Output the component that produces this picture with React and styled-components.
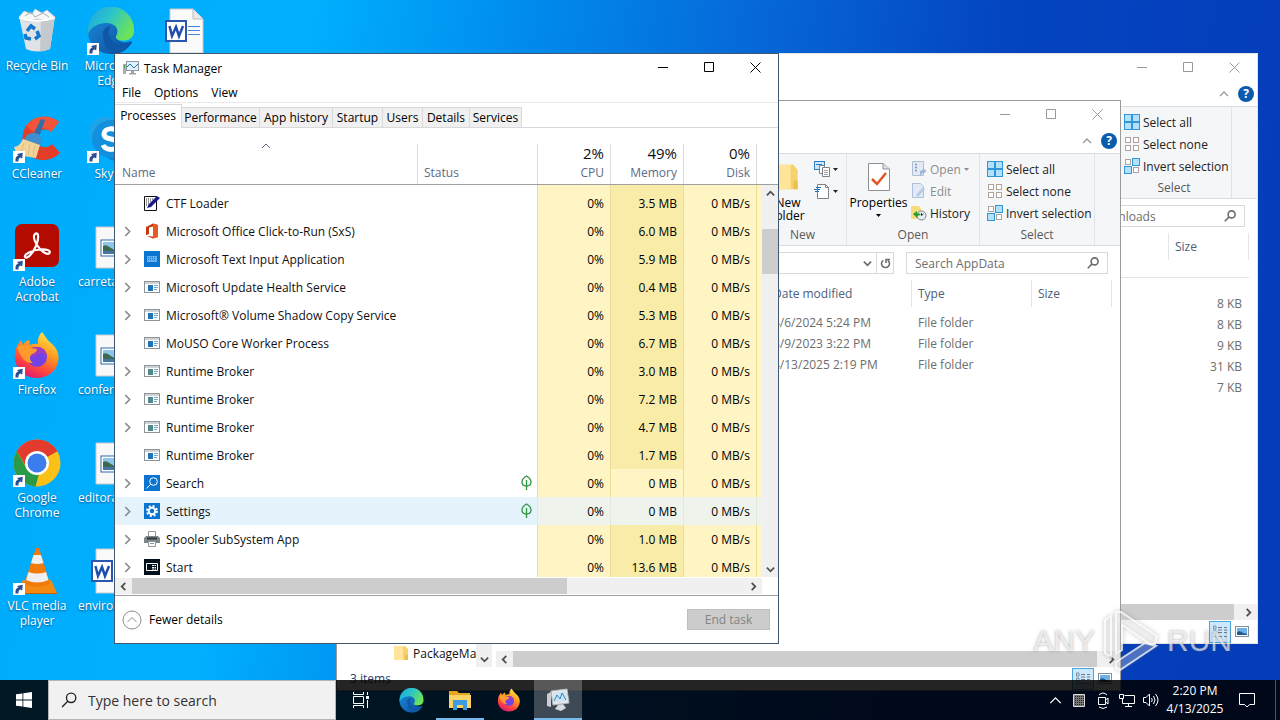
import React from "react";
import styled, { createGlobalStyle } from "styled-components";

const GlobalStyle = createGlobalStyle`
  * {
    box-sizing: border-box;
  }
  body {
    margin: 0;
    font-family: "Open Sans", "Noto Sans", sans-serif;
    font-size: 12px;
    color: #000;
  }
  button, input {
    font-family: inherit;
    font-size: inherit;
    color: inherit;
    border: none;
    background: none;
    padding: 0;
    margin: 0;
  }
  svg {
    display: block;
    flex-shrink: 0;
  }
`;

const Desktop = styled.main`
  position: relative;
  min-height: 100vh;
  overflow: hidden;
  background: linear-gradient(100deg, #00abfb 0%, #00b0ff 22%, #008fee 36%, #0668d8 54%, #0444c0 72%, #043bb8 100%);
`;

/* ---------- desktop shortcuts ---------- */

const Shortcuts = styled.div`
  display: grid;
  grid-template-columns: repeat(3, 74px);
  grid-auto-rows: 108px;
  padding-top: 7px;
`;

const Shortcut = styled.a`
  display: flex;
  flex-direction: column;
  align-items: center;
  color: #fff;
  text-decoration: none;
  text-align: center;
  text-shadow: 0 1px 2px rgba(0, 40, 90, 0.7);
  line-height: 15px;
`;

const ShortcutIcon = styled.span`
  position: relative;
  height: 48px;
  margin-bottom: 3px;
`;

const ArrowBadge = styled.span`
  position: absolute;
  left: 0;
  bottom: 0;
  background: #fff;
`;

const ShortcutName = styled.span`
  width: 100%;
  padding: 0 4px;
  text-align: ${(props) => (props.$start ? "left" : "center")};
`;

/* ---------- shared window parts ---------- */

const Window = styled.section`
  position: absolute;
  left: ${(props) => props.$left}px;
  top: ${(props) => props.$top}px;
  width: ${(props) => props.$width}px;
  height: 591px;
  display: flex;
  flex-direction: column;
  background: #fff;
  border: 1px solid ${(props) => props.$edge};
`;

const TitleBar = styled.header`
  display: flex;
  align-items: center;
  height: 28px;
  padding-left: 8px;
  gap: 5px;
`;

const WindowTitle = styled.h1`
  margin: 0;
  flex: 1;
  font-size: 12px;
  font-weight: 400;
`;

const CaptionButtons = styled.div`
  display: flex;
  align-self: flex-start;
  margin-left: auto;
`;

const CaptionButton = styled.button`
  display: flex;
  align-items: center;
  justify-content: center;
  width: 46px;
  height: 26px;
  color: ${(props) => (props.$dim ? "#999" : "#000")};
`;

const Scrollbar = styled.div`
  display: flex;
  flex-direction: ${(props) => (props.$vertical ? "column" : "row")};
  ${(props) => (props.$vertical ? "width: 16px;" : "height: 16px;")}
  flex-shrink: 0;
  background: #f0f0f0;
`;

const ScrollArrow = styled.button`
  display: flex;
  align-items: center;
  justify-content: center;
  width: ${(props) => (props.$wide ? 17 : 16)}px;
  height: 16px;
  flex-shrink: 0;
  color: #505050;
`;

const ScrollTrack = styled.div`
  flex: 1;
  display: flex;
  flex-direction: column;
`;

const ScrollThumb = styled.div`
  background: #cdcdcd;
  ${(props) => (props.$width ? `width: ${props.$width}; height: 100%;` : "")}
  ${(props) => (props.$height ? `height: ${props.$height}px; margin-top: ${props.$offset}px;` : "")}
`;

/* ---------- task manager ---------- */

const MenuBar = styled.nav`
  display: flex;
  gap: 13px;
  height: 21px;
  padding-left: 7px;
  border-bottom: 1px solid #ebebeb;
  line-height: 20px;
`;

const Tabs = styled.div`
  display: flex;
  align-items: flex-end;
  height: 25px;
  border-bottom: 1px solid #d9d9d9;
`;

const Tab = styled.button`
  width: ${(props) => props.$width}px;
  height: ${(props) => (props.$active ? 24 : 20)}px;
  padding-bottom: ${(props) => (props.$active ? 2 : 0)}px;
  margin-bottom: ${(props) => (props.$active ? -1 : 0)}px;
  background: ${(props) => (props.$active ? "#fff" : "#f0f0f0")};
  border-top: 1px solid #d9d9d9;
  border-right: 1px solid #d9d9d9;
  white-space: nowrap;
`;

const ProcessArea = styled.div`
  display: flex;
  flex: 1;
  min-height: 0;
`;

const TableClip = styled.div`
  flex: 1;
  min-width: 0;
  overflow: hidden;
`;

const ProcessTable = styled.table`
  width: 100%;
  table-layout: fixed;
  border-collapse: separate;
  border-spacing: 0;
`;

const HeadCell = styled.th`
  height: 57px;
  padding: 13px ${(props) => (props.$right ? 6 : 7)}px 3px;
  vertical-align: bottom;
  border-bottom: 1px solid #a0a0a0;
  background: ${(props) => (props.$first ? "none" : "linear-gradient(#dcdcdc, #dcdcdc) 0 16px / 1px 100% no-repeat")};
  font-weight: 400;
  text-align: ${(props) => (props.$right ? "right" : "left")};
  color: #5c6b87;
  line-height: 16px;
`;

const SortMark = styled.span`
  display: flex;
  justify-content: center;
  padding-bottom: 14px;
`;

const Usage = styled.strong`
  display: block;
  font-size: 15px;
  font-weight: 400;
  line-height: 24px;
  color: #111;
`;

const Row = styled.tr`
  height: 28px;
  background: ${(props) => (props.$hover ? "#e5f3fd" : "#fff")};
  &:first-child td {
    padding-top: 4px;
  }
`;

const NameCell = styled.td`
  padding: 0 7px;
`;

const NameLine = styled.div`
  display: grid;
  grid-template-columns: 16px 16px 1fr;
  gap: 6px;
  align-items: center;
  height: 28px;
  color: #111;
  white-space: nowrap;
`;

const RowChevron = styled.span`
  color: #8a8a8a;
`;

const StatusCell = styled.td`
  padding: 0 5px;
  & > svg {
    margin-left: auto;
  }
`;

const ValueCell = styled.td`
  padding: 0 6px;
  text-align: right;
  white-space: nowrap;
  border-left: 1px solid ${(props) => (props.$hover ? "#e3e9e0" : "#ebdc96")};
  background: ${(props) => (props.$hover ? "#eef3ec" : props.$warm ? "#f9eca8" : "#fff4c4")};
`;

const ScrollSide = styled.div`
  display: flex;
  flex-direction: column;
`;

const ScrollHead = styled.div`
  height: 57px;
  border-bottom: 1px solid #a0a0a0;
`;

const SideScroll = styled(Scrollbar)`
  flex: 1;
`;

const BottomScroll = styled.div`
  padding: 1px 16px 1px 0;
  border-bottom: 1px solid #a0a0a0;
`;

const Footer = styled.footer`
  display: flex;
  align-items: center;
  justify-content: space-between;
  height: 47px;
  padding: 0 8px 0 7px;
`;

const FewerDetails = styled.button`
  display: flex;
  align-items: center;
  gap: 7px;
`;

const EndTask = styled.button`
  width: 83px;
  height: 21px;
  background: #ccc;
  border: 1px solid #bfbfbf;
  color: #838383;
`;

/* ---------- file explorer ---------- */

const RibbonTabs = styled.div`
  display: flex;
  align-items: center;
  justify-content: flex-end;
  gap: 9px;
  height: 24px;
  padding-right: 3px;
  color: #999;
`;

const HelpButton = styled.button`
  width: 16px;
  height: 16px;
  border-radius: 8px;
  background: #0a5bad;
  color: #fff;
  font-weight: 700;
  line-height: 16px;
`;

const Ribbon = styled.div`
  display: flex;
  justify-content: flex-end;
  height: 93px;
  padding-right: 25px;
  background: #f5f6f7;
  border-top: 1px solid #dadbdc;
  border-bottom: 1px solid #dadbdc;
`;

const RibbonGroup = styled.fieldset`
  display: flex;
  flex-direction: column;
  width: ${(props) => props.$width}px;
  min-width: 0;
  margin: 0;
  padding: 4px 0 0;
  border: none;
  border-right: 1px solid #e2e3e4;
`;

const GroupBody = styled.div`
  display: flex;
  flex: 1;
  gap: ${(props) => props.$gap || 0}px;
  padding: 0 ${(props) => props.$pad}px;
`;

const GroupName = styled.span`
  height: 21px;
  line-height: 21px;
  text-align: center;
  color: #5a5a5a;
`;

const BigButton = styled.button`
  display: flex;
  flex-direction: column;
  align-items: center;
  width: ${(props) => props.$width}px;
  padding-top: 5px;
  line-height: 13px;
  gap: 5px;
`;

const SmallButtons = styled.div`
  display: flex;
  flex-direction: column;
`;

const SmallButton = styled.button`
  display: flex;
  align-items: center;
  gap: 3px;
  height: 22px;
  white-space: nowrap;
  color: ${(props) => (props.$off ? "#8d8d8d" : "#222")};
`;

const AddressRow = styled.div`
  display: flex;
  justify-content: flex-end;
  gap: 12px;
  padding: 6px 12px 6px 80px;
`;

const AddressBox = styled.div`
  flex: 1;
  display: flex;
  justify-content: flex-end;
  height: 22px;
  border: 1px solid #d9d9d9;
  color: #6d6d6d;
`;

const AddressButton = styled.button`
  display: flex;
  align-items: center;
  justify-content: center;
  width: 17px;
  border-left: ${(props) => (props.$split ? "1px solid #d9d9d9" : "none")};
`;

const SearchBox = styled.label`
  display: flex;
  align-items: center;
  justify-content: space-between;
  width: 202px;
  height: 22px;
  padding: 0 8px;
  border: 1px solid #d9d9d9;
  color: #6d6d6d;
`;

const SearchInput = styled.input`
  width: 150px;
  outline: none;
  &::placeholder {
    color: #6d6d6d;
    opacity: 1;
  }
`;

const ExplorerBody = styled.div`
  display: flex;
  flex: 1;
  min-height: 0;
`;

const NavPane = styled.nav`
  display: flex;
  width: 155px;
`;

const NavList = styled.div`
  flex: 1;
  display: flex;
  align-items: flex-end;
  padding: 0 0 3px 56px;
`;

const NavItem = styled.a`
  display: flex;
  align-items: center;
  gap: 4px;
  height: 22px;
  color: #111;
  text-decoration: none;
`;

const NavScroll = styled(Scrollbar)`
  justify-content: flex-end;
`;

const FilePane = styled.div`
  flex: 1;
  display: flex;
  flex-direction: column;
  min-width: 0;
  padding-left: 4px;
`;

const FileTable = styled.table`
  flex-shrink: 0;
  width: calc(100% - 8px);
  table-layout: fixed;
  border-collapse: separate;
  border-spacing: 0;
  color: #6d6d6d;
`;

const FileHead = styled.th`
  height: 27px;
  padding: 0 6px;
  font-weight: 400;
  text-align: left;
  color: #4c607a;
  border-right: 1px solid #e5e5e5;
`;

const GroupRule = styled.td`
  height: ${(props) => props.$height}px;
  padding: 0;
  vertical-align: top;
`;

const Rule = styled.hr`
  margin: 17px 0 0;
  border: none;
  border-top: 1px solid #e2e2e2;
`;

const FileCell = styled.td`
  height: 21px;
  padding: 0 7px 0 6px;
  white-space: nowrap;
  text-align: ${(props) => (props.$right ? "right" : "left")};
`;

const Spacer = styled.div`
  flex: 1;
`;

const StatusBar = styled.footer`
  display: flex;
  justify-content: space-between;
  align-items: center;
  height: 23px;
  padding: 0 4px 0 13px;
  color: #1e3c6e;
`;

const ViewButtons = styled.div`
  display: flex;
  align-items: center;
`;

const ViewButton = styled.button`
  display: flex;
  align-items: center;
  justify-content: center;
  width: 22px;
  height: 22px;
  background: ${(props) => (props.$on ? "#cce8ff" : "none")};
  border: 1px solid ${(props) => (props.$on ? "#4aa5dc" : "transparent")};
`;

/* ---------- taskbar ---------- */

const Taskbar = styled.nav`
  position: absolute;
  left: 0;
  right: 0;
  bottom: 0;
  display: flex;
  height: 40px;
  background: rgba(0, 0, 0, 0.86);
  color: #fff;
`;

const TaskButton = styled.button`
  display: flex;
  align-items: center;
  justify-content: center;
  width: 48px;
  margin-right: ${(props) => props.$gap || 0}px;
  background: ${(props) => (props.$active ? "rgba(255, 255, 255, 0.24)" : "none")};
  border-top: 2px solid transparent;
  border-bottom: 2px solid ${(props) => (props.$open ? "#76b9ed" : "transparent")};
`;

const TaskSearch = styled.label`
  display: flex;
  align-items: center;
  gap: 11px;
  width: 288px;
  padding-left: 12px;
  background: #f1f1f1;
  border: 1px solid #b5b5b5;
  color: #222;
`;

const TaskSearchInput = styled.input`
  flex: 1;
  font-size: 14px;
  outline: none;
  &::placeholder {
    color: #333;
    opacity: 1;
  }
`;

const Tray = styled.div`
  display: flex;
  align-items: center;
  margin-left: auto;
`;

const TrayButton = styled.button`
  display: flex;
  align-items: center;
  justify-content: center;
  width: ${(props) => props.$width || 24}px;
  height: 40px;
`;

const Clock = styled.time`
  width: 64px;
  text-align: center;
  line-height: 18px;
`;

const ShowDesktop = styled.button`
  width: 5px;
  height: 40px;
  margin-left: 8px;
  border-left: 1px solid #4a5568;
`;

const Watermark = styled.div`
  position: absolute;
  right: 48px;
  bottom: 46px;
  display: flex;
  align-items: center;
  gap: 8px;
  height: 66px;
  font-family: "Liberation Sans", sans-serif;
  font-size: 30px;
  color: rgba(255, 255, 255, 0.65);
  text-shadow: 0 0 3px rgba(90, 90, 90, 0.5);
  pointer-events: none;
  & > svg {
    filter: drop-shadow(0 0 2px rgba(90, 90, 90, 0.5));
  }
`;

/* ---------- drawings ---------- */

const Chevron = ({ dir = "down", size = 9, stroke = 2 }) => {
  const paths = {
    down: "M1 3 L5 7 L9 3",
    up: "M1 7 L5 3 L9 7",
    left: "M7 1 L3 5 L7 9",
    right: "M3 1 L7 5 L3 9",
  };
  return (
    <svg width={size} height={size} viewBox="0 0 10 10" fill="none" stroke="currentColor" strokeWidth={stroke}>
      <path d={paths[dir]} />
    </svg>
  );
};

const Caret = () => (
  <svg width="5" height="3" viewBox="0 0 5 3" fill="currentColor">
    <path d="M0 0H5L2.5 3Z" />
  </svg>
);

const Minimize = () => (
  <svg width="10" height="10" viewBox="0 0 10 10" stroke="currentColor">
    <path d="M0 5.5H10" />
  </svg>
);

const Maximize = () => (
  <svg width="10" height="10" viewBox="0 0 10 10" stroke="currentColor" fill="none">
    <path d="M.5 .5H9.5V9.5H.5Z" />
  </svg>
);

const Close = () => (
  <svg width="11" height="11" viewBox="0 0 11 11" stroke="currentColor" fill="none">
    <path d="M.5 .5L10.5 10.5M10.5 .5L.5 10.5" />
  </svg>
);

const Magnifier = ({ size = 12, stroke = 1.6 }) => (
  <svg width={size} height={size} viewBox="0 0 12 12" stroke="currentColor" fill="none" strokeWidth={stroke}>
    <circle cx="7.6" cy="4.4" r="3.5" />
    <path d="M5.1 6.9L.8 11.2" />
  </svg>
);

const ArrowGlyph = () => (
  <svg width="12" height="12" viewBox="0 0 12 12">
    <path d="M2.500 10.500C2 7 3.500 5 5.500 4.600L4 3L9.800 1.800L9.200 7.600L7.500 6.400C5.800 7 5.200 8.300 5.500 10.500Z" fill="#2b4f93" />
  </svg>
);

const RecycleBin = () => (
  <svg width="48" height="48" viewBox="0 0 48 48">
    <path d="M6 9L42 9L37 42Q24 47 13 42Z" fill="#dfe3e6" />
    <path d="M28 10L42 9L37 42Q32 44 27 44.500Z" fill="#c4c9ce" />
    <path d="M6 10L11 4L19 7L22 2L29 6L34 3L42 10L34 14L24 12L14 15Z" fill="#f4f6f7" stroke="#b9c0c5" strokeWidth=".7" />
    <path d="M12 9L18 5L22 10L30 6L36 10" fill="none" stroke="#a9b1b7" />
    <path d="M6 11Q24 17 42 11" fill="none" stroke="#fff" strokeWidth="1.500" />
    <g fill="none" stroke="#1678cc" strokeWidth="3.500">
      <path d="M14 24L18 19L22 22" />
      <path d="M24 24L26 29L22 32" />
      <path d="M18 32L13 31L12 27" />
    </g>
  </svg>
);

const EdgeLogo = ({ size = 48 }) => (
  <svg width={size} height={size} viewBox="0 0 48 48">
    <defs>
      <linearGradient id="edgeTop" x1="0" y1="0" x2="1" y2=".5">
        <stop offset="0" stopColor="#1aa4e4" />
        <stop offset=".5" stopColor="#2cc4c8" />
        <stop offset="1" stopColor="#6be35a" />
      </linearGradient>
      <linearGradient id="edgeLow" x1="0" y1="0" x2="1" y2="1">
        <stop offset="0" stopColor="#1b8fdc" />
        <stop offset="1" stopColor="#0c4a9c" />
      </linearGradient>
    </defs>
    <path d="M1 24C2 10 12 2 24 2L34 24L30 30C31 35 38 37 44 34Q46 35 44 37C39 44 32 47 24 47C10 47 1 36 1 24Z" fill="url(#edgeLow)" />
    <path d="M1 23A23 23 0 0 1 47 22C48 31 41 34 35 33.500C29 33 27.500 31 30 27C32 21 27 16 20 16C9 16 2 22 1 28Z" fill="url(#edgeTop)" />
    <path d="M16 27C16 21 20 19 24 19C18 27 25 38 36 38C40 38 42 37 44 36C40 43 34 47 26 47C20 43 16 36 16 27Z" fill="#0f58a8" />
  </svg>
);

const WordDoc = () => (
  <svg width="48" height="48" viewBox="0 0 48 48">
    <path d="M9 2H32L42 12V46H9Z" fill="#fafafa" stroke="#c8c8c8" />
    <path d="M32 2V12H42" fill="#e9e9e9" stroke="#bdbdbd" />
    <path d="M27 19.500H39M27 23.500H39M27 27.500H39" stroke="#4a84d4" />
    <rect x="5" y="14" width="20" height="20" fill="#fff" stroke="#2a56b0" strokeWidth="2" />
    <path d="M8.500 19L11 29L15 20L18 29L22 19" fill="none" stroke="#1f4fae" strokeWidth="2.500" />
  </svg>
);

const CCleanerLogo = () => (
  <svg width="48" height="48" viewBox="0 0 48 48">
    <path d="M46 7C37-1 20 0 13 11C6 23 10 38 21 43C30 47 40 45 47 38L39 29C33 35 24 32 23 24C23 15 32 12 38 17Z" fill="#e23d28" />
    <path d="M46 7C37-1 20 0 13 11L22 18C26 12 33 12 38 17Z" fill="#f0553c" />
    <path d="M28 4L32 5L26 22L20 20Z" fill="#2e6fa8" />
    <path d="M14 20Q20 16 27 20L29 29L10 27Z" fill="#3f8fcf" />
    <path d="M10 24L27 30L23 43L4 40Q2 35 1 32Q7 31 10 24Z" fill="#f2d49b" />
    <path d="M11 28L8 38M17 29L15 40M22 31L20 41" stroke="#dfbd80" />
  </svg>
);

const SkypeLogo = () => (
  <svg width="48" height="48" viewBox="0 0 48 48">
    <circle cx="18" cy="18" r="16" fill="#1fa4e8" />
    <circle cx="30" cy="30" r="16" fill="#0f7fd4" />
    <circle cx="24" cy="24" r="19" fill="#128fdd" />
    <path d="M31 17C28 12 17 13 17 19C17 26 31 22 31 29C31 36 19 36 16 30" fill="none" stroke="#fff" strokeWidth="5" />
  </svg>
);

const AcrobatLogo = () => (
  <svg width="48" height="48" viewBox="0 0 48 48">
    <rect x="2" y="1" width="44" height="43" rx="7" fill="#b30b00" />
    <path d="M22 11C26 8 26 16 23 23C20 30 14 37 12 34C11 31 20 27 27 26.500C33 26 38 27 36.500 30C34 33 27 27 24 22C21 17 20 13 22 11Z" fill="none" stroke="#fff" strokeWidth="2.200" />
  </svg>
);

const FirefoxLogo = ({ size = 48 }) => (
  <svg width={size} height={size} viewBox="0 0 48 48">
    <defs>
      <linearGradient id="foxFire" x1=".8" y1="0" x2=".3" y2="1">
        <stop offset="0" stopColor="#fff14f" />
        <stop offset=".4" stopColor="#ff9a1f" />
        <stop offset=".75" stopColor="#ff4240" />
        <stop offset="1" stopColor="#d81a74" />
      </linearGradient>
    </defs>
    <path d="M29 1C33 6 34 9 38 12C44 17 47 24 45 31C43 41 34 47 24 47C12 47 3 39 2 28C1 20 4 14 8 9L10 14Q12 10 16 9L17 14Q21 12 25 13Q24 6 29 1Z" fill="url(#foxFire)" />
    <circle cx="24" cy="26" r="10" fill="#7542e5" />
    <path d="M15 22C15 17 19 16 24 16C30 16 34 20 34 26C31 21 27 21 24 24C21 26 16 27 15 22Z" fill="#a03cc4" />
    <path d="M4 16C8 13 14 14 18 17L24 18C24 22 20 22 18 24C16 27 17 30 20 32C13 33 8 27 4 16Z" fill="#ff9a2b" />
  </svg>
);

const ChromeLogo = () => (
  <svg width="48" height="48" viewBox="0 0 48 48">
    <circle cx="24" cy="24" r="23.500" fill="#fbc116" />
    <path d="M24 24L3.600 12.300A23.500 23.500 0 0 1 44.400 12.300Z" fill="#e33b2e" />
    <path d="M24 12H44.300Q34 -3 14 3L3.700 12.200L14 29Z" fill="#e33b2e" />
    <path d="M3.700 12.200L14 30Q19 36 26 35L22.500 47.400A23.500 23.500 0 0 1 3.700 12.200Z" fill="#2a9a48" />
    <circle cx="24" cy="24" r="12" fill="#fff" />
    <circle cx="24" cy="24" r="9.500" fill="#3b7ded" />
  </svg>
);

const VlcLogo = () => (
  <svg width="48" height="48" viewBox="0 0 48 48">
    <path d="M10 33H38L44 46H4Z" fill="#f58a12" />
    <path d="M4 46H44V47H4Z" fill="#c75f00" />
    <path d="M23 1H26L37 37Q24 43 11 37Z" fill="#f27a0a" />
    <path d="M20.500 8H28L30.500 16Q24 18 18 16Z" fill="#efefef" />
    <path d="M15.500 25Q24 28 33 25L35.500 33Q24 38 13 33Z" fill="#efefef" />
  </svg>
);

const ImageDoc = () => (
  <svg width="48" height="48" viewBox="0 0 48 48">
    <path d="M9 4H40V45H9Z" fill="#f8f8f8" stroke="#c9c9c9" />
    <rect x="14" y="17" width="22" height="16" fill="#fff" stroke="#2f6da8" />
    <rect x="16" y="19" width="18" height="12" fill="#8cc4ea" />
    <path d="M16 23Q19 21 24 25T34 28V31H16Z" fill="#3b6b4c" />
    <path d="M16 28H34V31H16Z" fill="#4477a8" />
  </svg>
);

const TaskManagerIcon = () => (
  <svg width="16" height="16" viewBox="0 0 16 16">
    <rect x="0" y="4" width="3" height="10" fill="#a9b0b3" />
    <rect x="1" y="5" width="1" height="3" fill="#3ca94a" />
    <rect x="3.500" y="1.500" width="12" height="9" fill="#dff1fb" stroke="#8e9aa3" />
    <path d="M4 7L7 4L11 8L15 4" fill="none" stroke="#2678b8" />
    <path d="M8 11H11V13H13V14.500H6V13H8Z" fill="#9ba4aa" />
  </svg>
);

const TaskManagerLogo = () => (
  <svg width="24" height="24" viewBox="0 0 24 24">
    <path d="M1 6L5 4V19L1 18Z" fill="#c9cdd0" />
    <path d="M5 3L21 1L23 15L7 17Z" fill="#e4e9ec" stroke="#b4babe" />
    <path d="M7 5L20 3L21 13L8 15Z" fill="#cfe4f1" />
    <path d="M8 13L11 7L14 11L16 5L20 12" fill="none" stroke="#3386c0" />
    <path d="M12 17L17 16L20 20L15 23L9 21Z" fill="#d5dadd" />
  </svg>
);

const CtfIcon = () => (
  <svg width="16" height="16" viewBox="0 0 16 16">
    <path d="M.5 1.500H12.500V15.500H.5Z" fill="#fff" stroke="#111" />
    <path d="M2 4H9M2 6H8M2 8H6M2 10H5" stroke="#333" strokeDasharray="1 1" />
    <path d="M3 13L5 9L13 1L16 3L7 12Z" fill="#161a8c" />
  </svg>
);

const OfficeIcon = () => (
  <svg width="16" height="16" viewBox="0 0 16 16">
    <path d="M2 4L9 .5L14 2V14L9 15.500L3 13L9 13.500V3.500L5 4.500V11L2 12.200Z" fill="#c8360a" />
    <path d="M9 .5L14 2V14L9 15.500Z" fill="#ea5a1f" />
  </svg>
);

const KeyboardIcon = () => (
  <svg width="16" height="16" viewBox="0 0 16 16">
    <rect width="16" height="16" fill="#0a74d1" />
    <rect x="3" y="5" width="10" height="6" fill="#69b1ee" />
    <path d="M4 6.500H12M4 8.500H12" stroke="#0a74d1" strokeDasharray="1 1" />
  </svg>
);

const AppIcon = ({ tint = "#1f74b8" }) => (
  <svg width="16" height="16" viewBox="0 0 16 16">
    <rect x=".5" y="2.500" width="15" height="11" fill="#fdfdfd" stroke="#8d959b" />
    <path d="M1 4H15" stroke="#c0c5c9" strokeWidth="1.500" />
    <rect x="4" y="6" width="5" height="6" fill={tint} />
    <path d="M10 6.500H14M10 8.500H14M10 10.500H13" stroke="#78a8c8" />
  </svg>
);

const SearchAppIcon = () => (
  <svg width="16" height="16" viewBox="0 0 16 16">
    <rect width="16" height="16" fill="#0a74d1" />
    <circle cx="9.500" cy="6.500" r="3.800" fill="none" stroke="#fff" />
    <path d="M6.700 9.300L2.500 13.500" stroke="#fff" />
  </svg>
);

const SettingsIcon = () => (
  <svg width="16" height="16" viewBox="0 0 16 16">
    <rect width="16" height="16" fill="#0a74d1" />
    <circle cx="8" cy="8" r="5" fill="none" stroke="#fff" strokeWidth="2" strokeDasharray="2 1.930" />
    <circle cx="8" cy="8" r="3.300" fill="none" stroke="#fff" strokeWidth="2" />
  </svg>
);

const PrinterIcon = () => (
  <svg width="16" height="16" viewBox="0 0 16 16">
    <path d="M4.500 .5H11.500V6H4.500Z" fill="#fff" stroke="#8c9499" />
    <path d="M0 7L2 5H14L16 7V12H0Z" fill="#7d868b" />
    <path d="M3 7.500H13" stroke="#30373b" strokeWidth="2" />
    <path d="M4.500 10.500H11.500V15.500H4.500Z" fill="#fff" stroke="#8c9499" />
    <path d="M6 12.500H10" stroke="#8c9499" />
  </svg>
);

const StartAppIcon = () => (
  <svg width="16" height="16" viewBox="0 0 16 16">
    <rect width="16" height="16" fill="#02101c" />
    <path d="M2.500 4.500H13.500V11.500H2.500Z" fill="none" stroke="#fff" />
    <path d="M8 6.500H12M8 8.500H12M8 10H12" stroke="#fff" strokeDasharray="2 .500" />
  </svg>
);

const Leaf = () => (
  <svg width="11" height="16" viewBox="0 0 11 16" fill="none" stroke="#2d9440">
    <path d="M5.500 1C2 3 1 5 1 7C1 9.500 3 11 5.500 11C8 11 10 9.500 10 7C10 5 9 3 5.500 1Z" strokeWidth="1.300" />
    <path d="M5.500 5V15" strokeWidth="1.300" />
  </svg>
);

const FolderIcon = ({ width = 16, height = 16 }) => (
  <svg width={width} height={height} viewBox="0 0 16 16" preserveAspectRatio="none">
    <path d="M1 1H12L15 4V15H1Z" fill="#f7d16b" />
    <path d="M1 1H10V15H1Z" fill="#ffe49a" />
    <path d="M12 10H15V15H12Z" fill="#eebf4b" />
  </svg>
);

const CopyIcon = () => (
  <svg width="16" height="16" viewBox="0 0 16 16" fill="#fff">
    <rect x=".5" y=".5" width="10" height="8" fill="#cfe6f8" stroke="#2f7fc0" />
    <path d="M2 3.500H8" stroke="#2f7fc0" />
    <path d="M5.500 4.500H10.500V12.500H5.500Z" stroke="#7c8288" />
    <path d="M8.500 6.500H15.500V15.500H8.500Z" stroke="#7c8288" />
    <path d="M10 9.500H14M10 11.500H14M10 13.500H14" stroke="#9aa1a7" />
  </svg>
);

const EasyAccessIcon = () => (
  <svg width="16" height="16" viewBox="0 0 16 16" fill="none">
    <path d="M3.500 1.500H11.500L14.500 4.500V15.500H3.500Z" fill="#fff" stroke="#7c8288" />
    <path d="M11.500 1.500V4.500H14.500" stroke="#7c8288" />
    <path d="M2 4.500H7M0 6.500H6M1 8.500H5" stroke="#1f6fb5" />
  </svg>
);

const PropertiesIcon = () => (
  <svg width="22" height="28" viewBox="0 0 22 28">
    <path d="M.5 .5H15L21.500 6V27.500H.5Z" fill="#fff" stroke="#8d9196" />
    <path d="M15 .5V6H21.500" fill="#d6e4f0" stroke="#8d9196" />
    <path d="M4 16L9 21L18 10" fill="none" stroke="#e2541f" strokeWidth="2.500" />
  </svg>
);

const OpenIcon = () => (
  <svg width="16" height="16" viewBox="0 0 16 16" opacity=".8">
    <path d="M1.500 .5H12.500V14.500H1.500Z" fill="#dfe8f4" stroke="#9db2cd" />
    <path d="M4 3.500H6M4 6.500H6M4 9.500H6" stroke="#5d7fb5" strokeWidth="1.500" />
    <path d="M9 15V11Q9 9 12 9V7L15.500 10L12 13V11.500Z" fill="#88a5d0" />
  </svg>
);

const EditIcon = () => (
  <svg width="16" height="16" viewBox="0 0 16 16" opacity=".8">
    <path d="M1.500 .5H9.500L12.500 3.500V14.500H1.500Z" fill="#dde8f5" stroke="#9db2cd" />
    <path d="M5 12L12 4L14 6L7 14Z" fill="#a9c0e0" />
  </svg>
);

const HistoryIcon = () => (
  <svg width="16" height="16" viewBox="0 0 16 16">
    <path d="M0 1H8L10 4V14H0Z" fill="#fbdc7c" />
    <circle cx="10.500" cy="10.500" r="4.500" fill="#e8eef2" stroke="#7a848c" />
    <path d="M10.500 8V10.500L12.500 9" stroke="#333" fill="none" />
    <path d="M2 9L6 6V8Q9 8 10 10Q7 10 6 11.500V13Z" fill="#25a13a" />
  </svg>
);

const Squares = ({ on }) => (
  <svg width="16" height="16" viewBox="0 0 16 16">
    {[[0, 0], [8, 0], [0, 8], [8, 8]].map(([x, y], i) => (
      <rect
        key={i}
        x={x + (on[i] ? 0.5 : 1.5)}
        y={y + (on[i] ? 0.5 : 1.5)}
        width={on[i] ? 7 : 5}
        height={on[i] ? 7 : 5}
        fill={on[i] ? "#b3e0fb" : "#fff"}
        stroke={on[i] ? "#2f96d8" : "#b0a29c"}
      />
    ))}
  </svg>
);

const Refresh = () => (
  <svg width="11" height="11" viewBox="0 0 11 11" fill="none" stroke="currentColor" strokeWidth="1.600">
    <path d="M3.200 2.300A4 4 0 1 0 7.800 2.300" />
    <path d="M6 5V1.500H10" />
  </svg>
);

const DetailsView = () => (
  <svg width="16" height="14" viewBox="0 0 16 14" fill="none">
    <path d="M1.500 1V4H4V1ZM1.500 6V9H4V6Z" stroke="#7d8ea0" />
    <path d="M6 2.500H10M12 2.500H15M6 5H10M12 5H15M6 7.500H10M12 7.500H15M1 11.500H4M6 11.500H10M12 11.500H15" stroke="#6c7986" />
  </svg>
);

const ThumbsView = () => (
  <svg width="14" height="12" viewBox="0 0 14 12">
    <rect x=".5" y=".5" width="13" height="10" fill="#fff" stroke="#7f8fa0" />
    <rect x="2" y="2" width="10" height="7" fill="#6db1e6" />
    <path d="M2 9V6Q5 4 8 7L12 8V9Z" fill="#275a8c" />
  </svg>
);

const WindowsLogo = () => (
  <svg width="16" height="16" viewBox="0 0 16 16" fill="#fff">
    <path d="M0 2.300L6.500 1.400V7.600H0ZM7.300 1.300L16 0V7.600H7.300ZM0 8.400H6.500V14.600L0 13.700ZM7.300 8.400H16V16L7.300 14.700Z" />
  </svg>
);

const TaskViewIcon = () => (
  <svg width="17" height="16" viewBox="0 0 17 16" fill="none" stroke="#fff">
    <path d="M1.500 4.500H11.500V11.500H1.500ZM1.500 0V2.500H11.500V0M1.500 16V13.500H11.500V16M15.500 0V3M15.500 8V16" />
    <path d="M14 4H17V7H14Z" fill="#fff" stroke="none" />
  </svg>
);

const ExplorerLogo = () => (
  <svg width="22" height="20" viewBox="0 0 22 20">
    <path d="M0 1H8L10 3H21V18H0Z" fill="#e9a520" />
    <path d="M0 5H22V18H0Z" fill="#fdd365" />
    <path d="M4 10H18V20H14V15H8V20H4Z" fill="#3e9be0" />
  </svg>
);

const TrayGrid = () => (
  <svg width="12" height="13" viewBox="0 0 12 13" stroke="#ddd" fill="none">
    <path d="M.5 .5H11.500V12.500H.5Z" fill="#777" />
    <path d="M2 2.500H11M2 4.500H11M2 6.500H11M2 8.500H11M2 10.500H11" stroke="#222" strokeDasharray="1 1" />
  </svg>
);

const TrayCamera = () => (
  <svg width="12" height="17" viewBox="0 0 12 17" stroke="#fff" fill="none">
    <path d="M1.500 5.500H8.500V12.500H1.500ZM8.500 8L11 6V12L8.500 10M2 3Q6 -1 10 3M2 15Q6 18 10 15" />
  </svg>
);

const TrayNetwork = () => (
  <svg width="16" height="15" viewBox="0 0 16 15" stroke="#fff" fill="none">
    <path d="M5.500 2.500H15.500V10.500H3.500V6M.5 1.500H4.500V5.500H.5ZM9.500 10.500V13.500M6 13.500H13" />
  </svg>
);

const TrayVolume = () => (
  <svg width="17" height="14" viewBox="0 0 17 14" stroke="#fff" fill="none">
    <path d="M.5 4.500H3L6.500 1V13L3 9.500H.5ZM8.500 5Q10 7 8.500 9M10.500 3Q13.500 7 10.500 11M12.500 1Q17.500 7 12.500 13" />
  </svg>
);

const NoticeIcon = () => (
  <svg width="16" height="16" viewBox="0 0 16 16" stroke="#fff" fill="none">
    <path d="M.5 1.500H15.500V12.500H10.500L8 15L5.500 12.500H.5Z" />
  </svg>
);

const PlayMark = () => (
  <svg width="56" height="62" viewBox="0 0 56 62" fill="rgba(255,255,255,.25)" stroke="rgba(255,255,255,.75)" strokeWidth="2">
    <path d="M2 10L8 6V47L2 43Z" />
    <path d="M13 2L18 2L54 26L52 34L47 34L19 15V40L13 44Z" />
    <path d="M13 52L42 33L53 36L17 60L13 58Z" />
  </svg>
);

/* ---------- data ---------- */

const shortcuts = [
  { name: "Recycle Bin", Icon: RecycleBin },
  { name: "Microsoft Edge", Icon: EdgeLogo, link: true },
  { name: "", Icon: WordDoc },
  { name: "CCleaner", Icon: CCleanerLogo, link: true },
  { name: "Skype", Icon: SkypeLogo, link: true },
  null,
  { name: "Adobe Acrobat", Icon: AcrobatLogo, link: true },
  { name: "carreta", Icon: ImageDoc, start: true },
  null,
  { name: "Firefox", Icon: FirefoxLogo, link: true },
  { name: "confere", Icon: ImageDoc, start: true },
  null,
  { name: "Google Chrome", Icon: ChromeLogo, link: true },
  { name: "editora", Icon: ImageDoc, start: true },
  null,
  { name: "VLC media player", Icon: VlcLogo, link: true },
  { name: "environ", Icon: WordDoc, start: true },
];

const tabs = [
  ["Processes", 67],
  ["Performance", 78],
  ["App history", 73],
  ["Startup", 50],
  ["Users", 40],
  ["Details", 47],
  ["Services", 52],
];

const broker = <AppIcon tint="#4f8a8b" />;

const processes = [
  { name: "CTF Loader", icon: <CtfIcon />, memory: "3.5 MB", single: true },
  { name: "Microsoft Office Click-to-Run (SxS)", icon: <OfficeIcon />, memory: "6.0 MB" },
  { name: "Microsoft Text Input Application", icon: <KeyboardIcon />, memory: "5.9 MB" },
  { name: "Microsoft Update Health Service", icon: <AppIcon />, memory: "0.4 MB" },
  { name: "Microsoft® Volume Shadow Copy Service", icon: <AppIcon />, memory: "5.3 MB" },
  { name: "MoUSO Core Worker Process", icon: <AppIcon />, memory: "6.7 MB", single: true },
  { name: "Runtime Broker", icon: broker, memory: "3.0 MB" },
  { name: "Runtime Broker", icon: broker, memory: "7.2 MB" },
  { name: "Runtime Broker", icon: broker, memory: "4.7 MB" },
  { name: "Runtime Broker", icon: <AppIcon />, memory: "1.7 MB", single: true },
  { name: "Search", icon: <SearchAppIcon />, memory: "0 MB", suspended: true },
  { name: "Settings", icon: <SettingsIcon />, memory: "0 MB", suspended: true, hover: true },
  { name: "Spooler SubSystem App", icon: <PrinterIcon />, memory: "1.0 MB" },
  { name: "Start", icon: <StartAppIcon />, memory: "13.6 MB" },
];

const folders = [
  ["Local", "4/6/2024 5:24 PM", "File folder", ""],
  ["LocalLow", "8/9/2023 3:22 PM", "File folder", ""],
  ["Roaming", "4/13/2025 2:19 PM", "File folder", ""],
];

const downloads = ["8 KB", "8 KB", "9 KB", "31 KB", "7 KB"].map((size) => ["", "", "", size]);

/* ---------- components ---------- */

const Captions = ({ dim }) => (
  <CaptionButtons>
    <CaptionButton $dim={dim} aria-label="Minimize"><Minimize /></CaptionButton>
    <CaptionButton $dim={dim} aria-label="Maximize"><Maximize /></CaptionButton>
    <CaptionButton $dim={dim} aria-label="Close"><Close /></CaptionButton>
  </CaptionButtons>
);

const HorizontalScroll = ({ thumb }) => (
  <Scrollbar>
    <ScrollArrow $wide aria-label="Scroll left"><Chevron dir="left" /></ScrollArrow>
    <ScrollTrack><ScrollThumb $width={thumb} /></ScrollTrack>
    <ScrollArrow $wide aria-label="Scroll right"><Chevron dir="right" /></ScrollArrow>
  </Scrollbar>
);

const TaskManager = () => (
  <Window $left={114} $top={53} $width={665} $edge="#3f5870">
    <TitleBar>
      <TaskManagerIcon />
      <WindowTitle>Task Manager</WindowTitle>
      <Captions />
    </TitleBar>
    <MenuBar>
      <button>File</button>
      <button>Options</button>
      <button>View</button>
    </MenuBar>
    <Tabs role="tablist">
      {tabs.map(([name, width], i) => (
        <Tab key={name} role="tab" aria-selected={i === 0} $width={width} $active={i === 0}>
          {name}
        </Tab>
      ))}
    </Tabs>
    <ProcessArea>
      <TableClip>
        <ProcessTable>
          <colgroup>
            <col />
            <col width="120" />
            <col width="73" />
            <col width="73" />
            <col width="73" />
            <col width="6" />
          </colgroup>
          <thead>
            <tr>
              <HeadCell $first>
                <SortMark><Chevron dir="up" size={10} stroke={1} /></SortMark>
                Name
              </HeadCell>
              <HeadCell>Status</HeadCell>
              <HeadCell $right><Usage>2%</Usage>CPU</HeadCell>
              <HeadCell $right><Usage>49%</Usage>Memory</HeadCell>
              <HeadCell $right><Usage>0%</Usage>Disk</HeadCell>
              <HeadCell as="td" />
            </tr>
          </thead>
          <tbody>
            {processes.map((p, i) => (
              <Row key={i} $hover={p.hover}>
                <NameCell>
                  <NameLine>
                    <RowChevron>{!p.single && <Chevron dir="right" size={11} stroke={1.4} />}</RowChevron>
                    {p.icon}
                    {p.name}
                  </NameLine>
                </NameCell>
                <StatusCell>{p.suspended && <Leaf />}</StatusCell>
                <ValueCell $hover={p.hover}>0%</ValueCell>
                <ValueCell $hover={p.hover} $warm={!p.suspended}>{p.memory}</ValueCell>
                <ValueCell $hover={p.hover}>0 MB/s</ValueCell>
                <ValueCell $hover={p.hover} />
              </Row>
            ))}
          </tbody>
        </ProcessTable>
      </TableClip>
      <ScrollSide>
        <ScrollHead />
        <SideScroll $vertical>
          <ScrollArrow aria-label="Scroll up"><Chevron dir="up" /></ScrollArrow>
          <ScrollTrack><ScrollThumb $height={45} $offset={28} /></ScrollTrack>
          <ScrollArrow aria-label="Scroll down"><Chevron /></ScrollArrow>
        </SideScroll>
      </ScrollSide>
    </ProcessArea>
    <BottomScroll>
      <HorizontalScroll thumb="71%" />
    </BottomScroll>
    <Footer>
      <FewerDetails>
        <svg width="20" height="20" viewBox="0 0 20 20" fill="none" stroke="#8f8f8f">
          <circle cx="10" cy="10" r="9" />
          <path d="M5.500 12L10 7.500L14.500 12" />
        </svg>
        Fewer details
      </FewerDetails>
      <EndTask disabled>End task</EndTask>
    </Footer>
  </Window>
);

const ExplorerRibbon = () => (
  <Ribbon>
    <RibbonGroup $width={88}>
      <GroupBody $pad={3}>
        <BigButton $width={52}>
          <FolderIcon width={22} height={28} />
          <span>New<br />folder</span>
        </BigButton>
        <SmallButtons>
          <SmallButton aria-label="New item"><CopyIcon /><Caret /></SmallButton>
          <SmallButton aria-label="Easy access"><EasyAccessIcon /><Caret /></SmallButton>
        </SmallButtons>
      </GroupBody>
      <GroupName>New</GroupName>
    </RibbonGroup>
    <RibbonGroup $width={133}>
      <GroupBody $pad={3} $gap={4}>
        <BigButton $width={57}>
          <PropertiesIcon />
          Properties
          <Caret />
        </BigButton>
        <SmallButtons>
          <SmallButton $off disabled><OpenIcon />Open <Caret /></SmallButton>
          <SmallButton $off disabled><EditIcon />Edit</SmallButton>
          <SmallButton><HistoryIcon />History</SmallButton>
        </SmallButtons>
      </GroupBody>
      <GroupName>Open</GroupName>
    </RibbonGroup>
    <RibbonGroup $width={115}>
      <GroupBody $pad={7}>
        <SmallButtons>
          <SmallButton><Squares on={[1, 1, 1, 1]} />Select all</SmallButton>
          <SmallButton><Squares on={[0, 0, 0, 0]} />Select none</SmallButton>
          <SmallButton><Squares on={[0, 1, 1, 0]} />Invert selection</SmallButton>
        </SmallButtons>
      </GroupBody>
      <GroupName>Select</GroupName>
    </RibbonGroup>
  </Ribbon>
);

const Explorer = ({ left, top, edge, place, rows, grouped, status, navItem }) => (
  <Window $left={left} $top={top} $width={785} $edge={edge}>
    <TitleBar>
      <Captions dim />
    </TitleBar>
    <RibbonTabs>
      <Chevron dir="up" size={10} stroke={1.4} />
      <HelpButton aria-label="Help">?</HelpButton>
    </RibbonTabs>
    <ExplorerRibbon />
    <AddressRow>
      <AddressBox>
        <AddressButton aria-label="Previous locations"><Chevron /></AddressButton>
        <AddressButton $split aria-label="Refresh"><Refresh /></AddressButton>
      </AddressBox>
      <SearchBox>
        <SearchInput aria-label={`Search ${place}`} placeholder={`Search ${place}`} />
        <Magnifier />
      </SearchBox>
    </AddressRow>
    <ExplorerBody>
      <NavPane>
        <NavList>
          {navItem && <NavItem href="#"><FolderIcon />{navItem}</NavItem>}
        </NavList>
        <NavScroll $vertical>
          <ScrollArrow aria-label="Scroll down"><Chevron /></ScrollArrow>
        </NavScroll>
      </NavPane>
      <FilePane>
        <FileTable>
          <colgroup>
            <col />
            <col width="145" />
            <col width="120" />
            <col width="80" />
          </colgroup>
          <thead>
            <tr>
              <FileHead>Name</FileHead>
              <FileHead>Date modified</FileHead>
              <FileHead>Type</FileHead>
              <FileHead>Size</FileHead>
            </tr>
          </thead>
          <tbody>
            <tr>
              <GroupRule colSpan="4" $height={grouped ? 33 : 5}>{grouped && <Rule />}</GroupRule>
            </tr>
            {rows.map((row, i) => (
              <tr key={i}>
                {row.map((text, n) => (
                  <FileCell key={n} $right={n === 3}>{text}</FileCell>
                ))}
              </tr>
            ))}
          </tbody>
        </FileTable>
        <Spacer />
        <HorizontalScroll thumb="99%" />
      </FilePane>
    </ExplorerBody>
    <StatusBar>
      <span>{status}</span>
      <ViewButtons>
        <ViewButton $on aria-label="Details view"><DetailsView /></ViewButton>
        <ViewButton aria-label="Thumbnails view"><ThumbsView /></ViewButton>
      </ViewButtons>
    </StatusBar>
  </Window>
);

const App = () => {
  return (
    <Desktop>
      <GlobalStyle />
      <Shortcuts>
        {shortcuts.map((item, i) =>
          item ? (
            <Shortcut key={i} href="#">
              <ShortcutIcon>
                <item.Icon />
                {item.link && <ArrowBadge><ArrowGlyph /></ArrowBadge>}
              </ShortcutIcon>
              <ShortcutName $start={item.start}>{item.name}</ShortcutName>
            </Shortcut>
          ) : (
            <span key={i} />
          )
        )}
      </Shortcuts>
      <Explorer left={473} top={53} edge="#e4e4e4" place="Downloads" rows={downloads} grouped status="" />
      <Explorer left={336} top={100} edge="#9a9a9a" place="AppData" rows={folders} status="3 items" navItem="PackageMa" />
      <TaskManager />
      <Taskbar>
        <TaskButton aria-label="Start"><WindowsLogo /></TaskButton>
        <TaskSearch>
          <Magnifier size={16} stroke={1} />
          <TaskSearchInput aria-label="Search" placeholder="Type here to search" />
        </TaskSearch>
        <TaskButton $gap={3} aria-label="Task view"><TaskViewIcon /></TaskButton>
        <TaskButton $gap={1} aria-label="Edge"><EdgeLogo size={25} /></TaskButton>
        <TaskButton $gap={1} $open aria-label="File Explorer"><ExplorerLogo /></TaskButton>
        <TaskButton $gap={1} aria-label="Firefox"><FirefoxLogo size={24} /></TaskButton>
        <TaskButton $active $open aria-label="Task Manager"><TaskManagerLogo /></TaskButton>
        <Tray>
          <TrayButton aria-label="Hidden icons"><Chevron dir="up" size={13} stroke={1} /></TrayButton>
          <TrayButton aria-label="Input"><TrayGrid /></TrayButton>
          <TrayButton aria-label="Meet now"><TrayCamera /></TrayButton>
          <TrayButton aria-label="Network"><TrayNetwork /></TrayButton>
          <TrayButton aria-label="Volume"><TrayVolume /></TrayButton>
          <Clock>2:20 PM<br />4/13/2025</Clock>
          <TrayButton $width={40} aria-label="Notifications"><NoticeIcon /></TrayButton>
          <ShowDesktop aria-label="Show desktop" />
        </Tray>
      </Taskbar>
      <Watermark>
        ANY
        <PlayMark />
        RUN
      </Watermark>
    </Desktop>
  );
};

export default App;
